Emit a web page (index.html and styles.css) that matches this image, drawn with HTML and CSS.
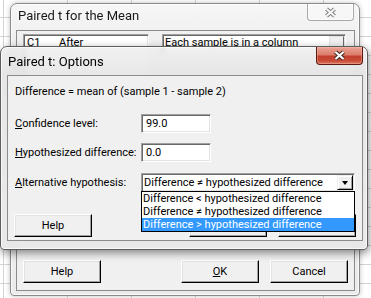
FILE: index.html
```html
<!DOCTYPE html>
<html>
<head>
<meta charset="utf-8">
<link rel="stylesheet" href="styles.css">
</head>
<body>
<div class="desktop">
  <div class="win back">
    <div class="titlebar">
      <span class="title">Paired t for the Mean</span>
      <span class="close inactive">
        <svg width="13" height="11" viewBox="0 0 13 11"><path d="M2.5 2 L10.5 9 M10.5 2 L2.5 9" stroke="#808080" stroke-width="4.2" fill="none"/><path d="M2.5 2 L10.5 9 M10.5 2 L2.5 9" stroke="#f6f6f6" stroke-width="2.2" fill="none"/></svg>
      </span>
    </div>
    <div class="client">
      <div class="toprow">
        <div class="listbox"><span class="col">C1</span>After</div>
        <div class="combo"><span class="ctext">Each sample is in a column</span><span class="cbtn"></span></div>
      </div>
      <div class="spacer"></div>
      <div class="btnrow">
        <div class="btn">Help</div>
        <div class="spacer"></div>
        <div class="btn"><u>O</u>K</div>
        <div class="btn">Cancel</div>
      </div>
    </div>
  </div>

  <div class="win front">
    <div class="titlebar">
      <span class="title">Paired t: Options</span>
      <span class="close active">
        <svg width="13" height="11" viewBox="0 0 13 11"><path d="M2.5 2 L10.5 9 M10.5 2 L2.5 9" stroke="#3a2a28" stroke-width="4.2" fill="none"/><path d="M2.5 2 L10.5 9 M10.5 2 L2.5 9" stroke="#ffffff" stroke-width="2.2" fill="none"/></svg>
      </span>
    </div>
    <div class="client">
      <div class="desc">Difference = mean of (sample 1 - sample 2)</div>
      <div class="field f1"><span class="label"><u>C</u>onfidence level:</span><div class="input">99.0</div></div>
      <div class="field f2"><span class="label"><u>H</u>ypothesized difference:</span><div class="input">0.0</div></div>
      <div class="field f3"><span class="label"><u>A</u>lternative hypothesis:</span>
        <div class="select"><span class="stext">Difference ≠ hypothesized difference</span><span class="sbtn"><span class="tri"></span></span>
          <ul class="dropdown">
            <li>Difference &lt; hypothesized difference</li>
            <li>Difference ≠ hypothesized difference</li>
            <li class="sel">Difference &gt; hypothesized difference</li>
          </ul>
        </div>
      </div>
      <div class="btnrow front-btns">
        <div class="btn">Help</div>
        <div class="spacer"></div>
        <div class="btn"></div>
        <div class="btn"></div>
      </div>
    </div>
  </div>
</div>
</body>
</html>
```
FILE: styles.css
```css
html, body {
  margin: 0;
  padding: 0;
}
body {
  width: 371px;
  height: 298px;
  overflow: hidden;
  font-family: Roboto, "Liberation Sans", sans-serif;
  font-size: 11px;
  color: #000;
  background-color: #ffffff;
  background-image:
    linear-gradient(to bottom, #d4d4d4 1px, transparent 1px),
    linear-gradient(to right, #d4d4d4 1px, transparent 1px);
  background-size: 100% 19px, 64px 100%;
  background-position: 0 17px, 3px 0;
}
.desktop {
  position: relative;
  width: 371px;
  height: 298px;
}
.win {
  position: absolute;
  box-sizing: border-box;
  display: flex;
  flex-direction: column;
  border-radius: 7px 7px 4px 4px;
  backdrop-filter: blur(2.5px);
}
.back {
  left: 10px;
  top: 3px;
  width: 350px;
  height: 293px;
  border: 1px solid #8a8a8a;
  background: linear-gradient(to bottom, rgba(246,246,246,0.9), rgba(236,236,236,0.9) 40px, rgba(234,234,234,0.92));
  box-shadow: inset 0 0 0 1px rgba(255,255,255,0.8), 0 0 5px rgba(0,0,0,0.25);
}
.front {
  left: 0;
  top: 46px;
  width: 368px;
  height: 204px;
  border: 1px solid #5e5e5e;
  background: linear-gradient(to bottom, rgba(238,238,238,0.82), rgba(228,228,228,0.86) 28px, rgba(232,232,232,0.9));
  box-shadow: inset 0 0 0 1px rgba(255,255,255,0.7), 1px 3px 8px rgba(0,0,0,0.45);
  z-index: 2;
}
.titlebar {
  display: flex;
  align-items: center;
  padding-left: 7px;
}
.back .titlebar {
  height: 26px;
}
.back .title {
  padding-bottom: 3px;
  color: #1a1a1a;
}
.front .titlebar {
  height: 28px;
}
.title {
  font-size: 13px;
  white-space: nowrap;
}
.close {
  margin-left: auto;
  align-self: flex-start;
  box-sizing: border-box;
  width: 47px;
  display: flex;
  align-items: center;
  justify-content: center;
  border-radius: 0 0 4px 4px;
}
.close.inactive {
  height: 17px;
  margin-right: 5px;
  border: 1px solid #a8a8a8;
  border-top: none;
  background: rgba(250,250,250,0.5);
  box-shadow: inset 0 0 0 1px rgba(255,255,255,0.8);
}
.close.active {
  height: 18px;
  margin-right: 4px;
  border: 1px solid #5a1a12;
  border-top: none;
  background: linear-gradient(to bottom, #e9a596 0%, #dc7d6c 45%, #c4402e 55%, #c84a36 80%, #db7b63 100%);
  box-shadow: inset 0 0 0 1px rgba(255,200,190,0.35);
}
.client {
  flex: 1;
  position: relative;
  display: flex;
  flex-direction: column;
  background: #f0f0f0;
  border: 1px solid #8c8c8c;
}
.back .client {
  margin: 0 4px 4px 5px;
  padding: 3px 6px 7px 6px;
}
.front .client {
  margin: 0 4px 8px 6px;
  padding: 8px 6px 3px 6px;
}
.spacer {
  flex: 1;
}
.toprow {
  display: flex;
  gap: 13px;
}
.listbox, .combo, .input, .select {
  box-sizing: border-box;
  background: #fff;
  border: 1px solid;
  border-color: #a0a0a0 #ffffff #ffffff #a0a0a0;
  box-shadow: inset 1px 1px #696969, inset -1px -1px #e3e3e3;
}
.listbox {
  width: 126px;
  height: 150px;
  padding: 1px 3px;
  line-height: 13px;
}
.col {
  display: inline-block;
  width: 32px;
}
.combo {
  width: 184px;
  height: 21px;
  display: flex;
  align-items: flex-start;
  padding: 1px 1px 1px 2px;
  line-height: 13px;
}
.ctext {
  flex: 1;
  white-space: nowrap;
}
.cbtn {
  width: 15px;
  height: 17px;
  box-sizing: border-box;
  border: 1px solid;
  border-color: #e3e3e3 #696969 #696969 #e3e3e3;
  background: #f0f0f0;
}
.btnrow {
  display: flex;
  gap: 11px;
}
.btn {
  box-sizing: border-box;
  width: 78px;
  height: 23px;
  display: flex;
  align-items: center;
  justify-content: center;
  background: #f0f0f0;
  border: 1px solid;
  border-color: #ffffff #000000 #000000 #ffffff;
  box-shadow: inset -1px -1px #a0a0a0, inset 1px 1px #e3e3e3;
}
.desc {
  height: 16px;
  line-height: 16px;
  padding-left: 1px;
  white-space: nowrap;
}
.field {
  display: flex;
  align-items: center;
}
.label {
  width: 127px;
  box-sizing: border-box;
  padding-left: 1px;
  white-space: nowrap;
}
.f1 { margin-top: 14px; }
.f2 { margin-top: 10px; }
.f3 { margin-top: 11px; }
.input {
  width: 70px;
  height: 19px;
  padding-left: 4px;
  line-height: 17px;
}
.select {
  position: relative;
  width: 214px;
  height: 19px;
  display: flex;
  align-items: stretch;
  padding: 1px 1px 1px 2px;
}
.stext {
  flex: 1;
  line-height: 15px;
  white-space: nowrap;
}
.sbtn {
  width: 16px;
  box-sizing: border-box;
  display: flex;
  align-items: center;
  justify-content: center;
  background: #f0f0f0;
  border: 1px solid;
  border-color: #f0f0f0 #000000 #000000 #f0f0f0;
  box-shadow: inset 1px 1px #ffffff, inset -1px -1px #a0a0a0;
}
.tri {
  width: 0;
  height: 0;
  border-left: 3.5px solid transparent;
  border-right: 3.5px solid transparent;
  border-top: 4px solid #000;
}
.dropdown {
  position: absolute;
  left: -1px;
  top: 100%;
  width: 214px;
  box-sizing: border-box;
  margin: 0;
  padding: 0;
  list-style: none;
  background: #fff;
  border: 1px solid #000;
  z-index: 3;
}
.dropdown li {
  height: 13px;
  line-height: 13px;
  padding-left: 1px;
  white-space: nowrap;
}
.dropdown li.sel {
  background: #3399ff;
  color: #fff;
}
.front-btns {
  margin-top: 22px;
}
u {
  text-underline-offset: 1px;
}
```
